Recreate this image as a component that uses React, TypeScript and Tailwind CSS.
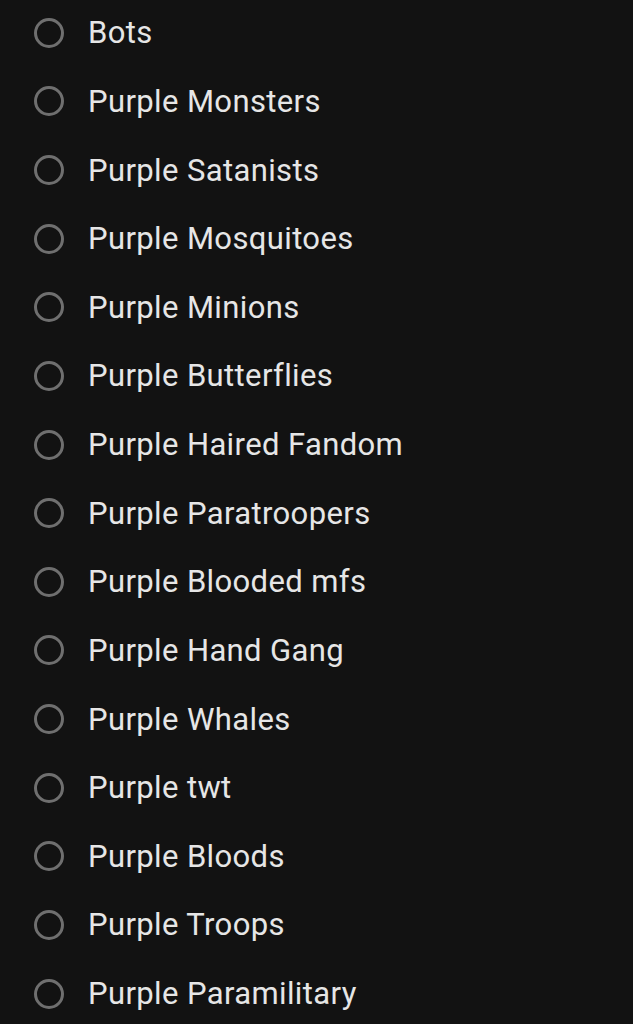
import React from "react";

const items = [
  "Bots",
  "Purple Monsters",
  "Purple Satanists",
  "Purple Mosquitoes",
  "Purple Minions",
  "Purple Butterflies",
  "Purple Haired Fandom",
  "Purple Paratroopers",
  "Purple Blooded mfs",
  "Purple Hand Gang",
  "Purple Whales",
  "Purple twt",
  "Purple Bloods",
  "Purple Troops",
  "Purple Paramilitary",
];

export default function App() {
  return (
    <div
      className="w-[633px] h-[1024px] overflow-hidden bg-[#121212]"
      style={{ fontFamily: "Roboto, 'Noto Sans', sans-serif" }}
    >
      <div className="flex flex-col mt-[-1.5px]">
        {items.map((t) => (
          <div key={t} className="flex items-center h-[68.64px] pl-[34px]">
            <div className="w-[30px] h-[30px] rounded-full border-[3px] border-[#6f6f6f] shrink-0" />
            <span className="ml-[24px] text-[31px] leading-none tracking-[0.38px] text-[#e6e6e6]">{t}</span>
          </div>
        ))}
      </div>
    </div>
  );
}
